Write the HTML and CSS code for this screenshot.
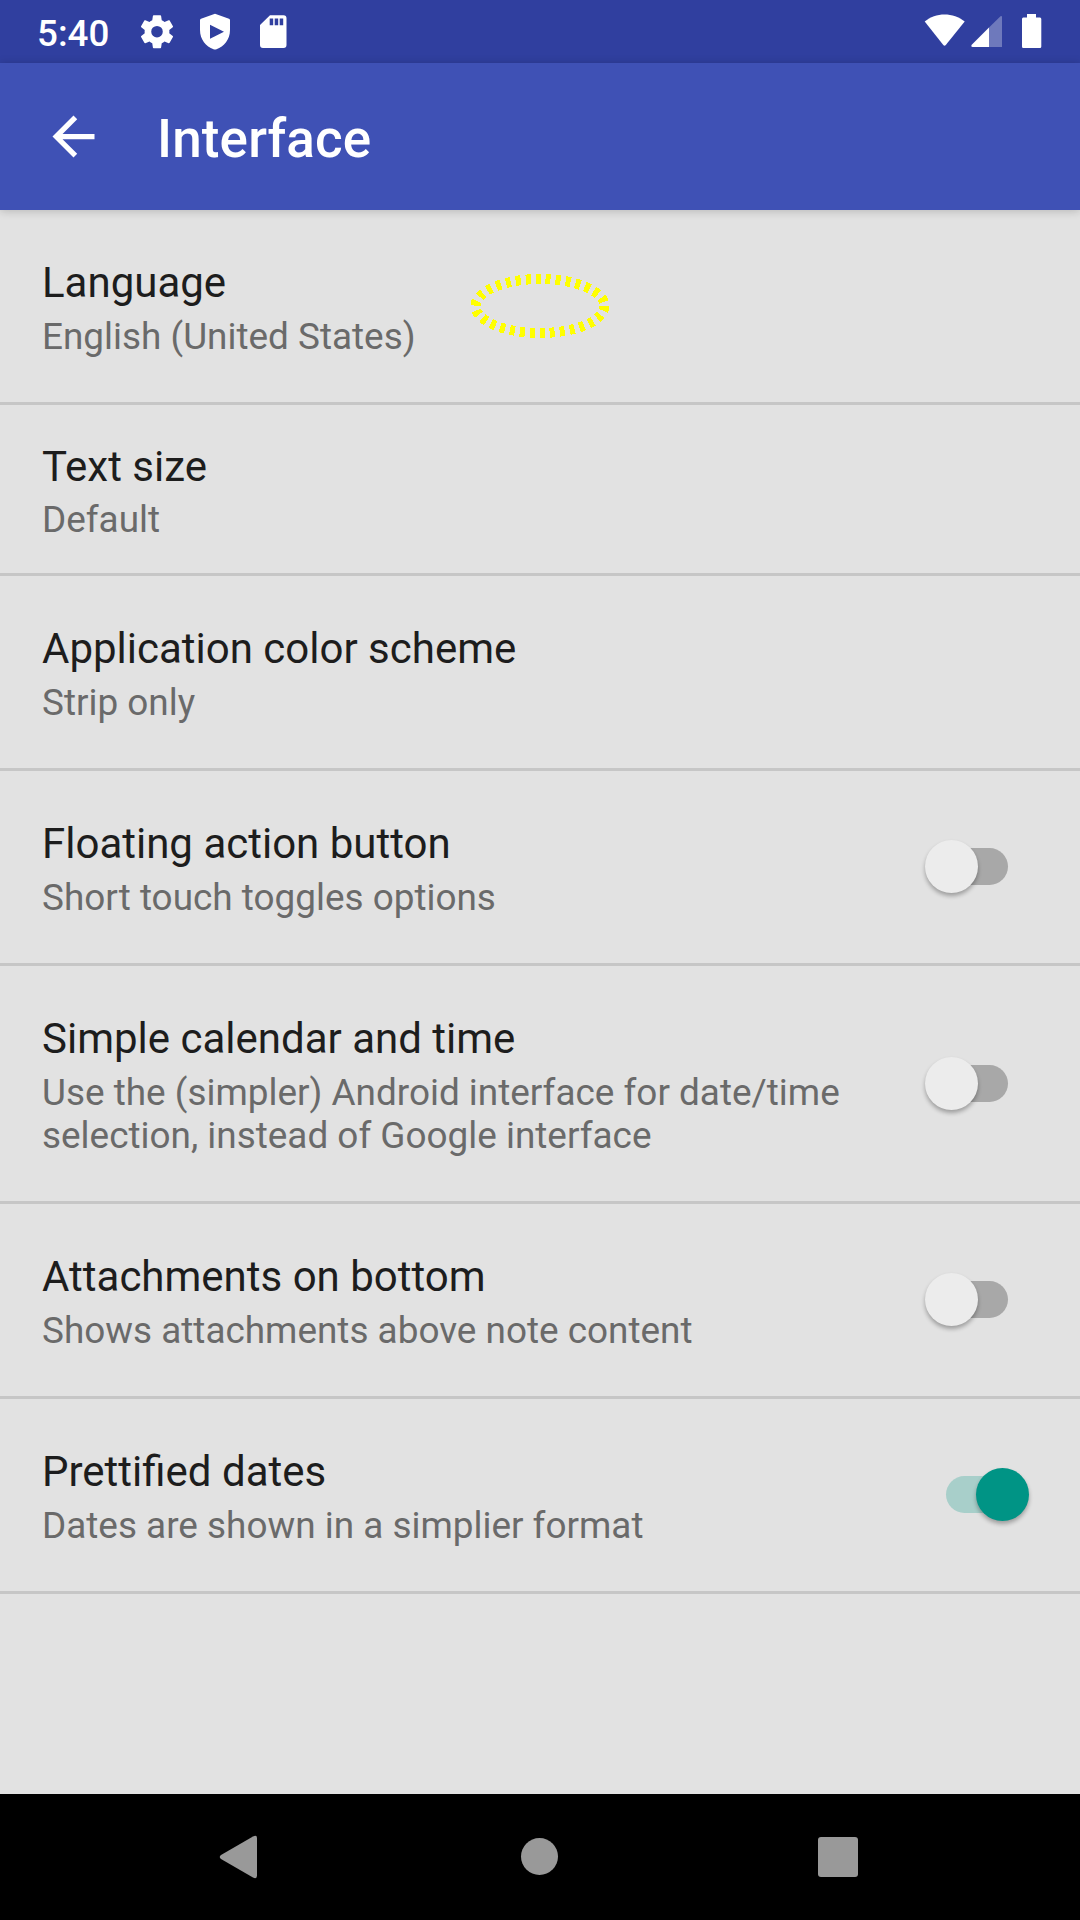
FILE: index.html
```html
<!DOCTYPE html>
<html lang="en">
<head>
<meta charset="utf-8">
<title>Interface</title>
<link rel="stylesheet" href="styles.css">
</head>
<body>
<div class="screen">
  <header class="status">
    <span class="clock">5:40</span>
    <svg class="status-left" width="150" height="63" viewBox="138 0 150 63" fill="#fff">
      <g transform="translate(137.200 11.900) scale(1.650)"><path d="M19.43 12.98c.04-.32.07-.64.07-.98s-.03-.66-.07-.98l2.11-1.65c.19-.15.24-.42.12-.64l-2-3.46c-.12-.22-.39-.3-.61-.22l-2.49 1c-.52-.4-1.080-.73-1.690-.98l-.38-2.650C14.460 2.180 14.250 2 14 2h-4c-.25 0-.46.18-.49.42l-.38 2.650c-.61.25-1.170.59-1.690.98l-2.490-1c-.23-.09-.49 0-.61.22l-2 3.460c-.13.22-.07.49.12.64l2.110 1.650c-.04.32-.07.65-.07.98s.03.66.07.98l-2.110 1.650c-.19.15-.24.42-.12.64l2 3.460c.12.22.39.3.61.22l2.490-1c.52.4 1.080.73 1.690.98l.38 2.650c.03.24.24.42.49.42h4c.25 0 .46-.18.49-.42l.38-2.650c.61-.25 1.170-.59 1.690-.98l2.490 1c.23.09.49 0 .61-.22l2-3.460c.12-.22.07-.49-.12-.64zM12 15.500a3.500 3.500 0 1 1 0-7 3.500 3.500 0 0 1 0 7z"/></g>
      <path fill-rule="evenodd" d="M215 13.700 229 18.700Q230 19 230 20.500V30C230 39.500 224 46.500 216.500 49.300Q215 49.900 213.500 49.300C206 46.500 200 39.500 200 30V20.500Q200 19 201 18.700ZM210 24.800V38.700L224 31.700Z"/>
      <path fill-rule="evenodd" d="M270 15.300H283.500Q286.500 15.300 286.500 18.300V45Q286.500 48 283.500 48H263Q260 48 260 45V25ZM269.700 18.500V25.200H273.200V18.500ZM274.700 18.500V25.200H278.200V18.500ZM279.700 18.500V25.200H283.200V18.500Z"/>
    </svg>
    <svg class="status-right" width="120" height="63" viewBox="922 0 120 63" fill="#fff">
      <path d="M924.700 21.500C935.500 12 953.500 12 964.700 21.500L945.800 45Q944.500 46.300 943.300 45Z"/>
      <path d="M1002 47V17Q1002 15.500 1000.500 16.200L989 27.500V47Z" opacity=".3"/>
      <path d="M989 27.500V47H972.500Q970.700 47 971.500 45Z"/>
      <path d="M1027 14H1036V17.500H1040Q1041.300 17.500 1041.300 19V46.500Q1041.300 48 1040 48H1023.300Q1022 48 1022 46.500V19Q1022 17.500 1023.300 17.500H1027Z"/>
    </svg>
  </header>
  <div class="toolbar">
    <svg class="back" width="63" height="63" viewBox="0 0 24 24" fill="#fff"><path d="M20 11H7.830l5.590-5.590L12 4l-8 8 8 8 1.410-1.410L7.830 13H20v-2z"/></svg>
    <h1 class="heading">Interface</h1>
  </div>
  <main class="list">
    <section class="row"><div class="text"><div class="title">Language</div><div class="summary">English (United States)</div></div>
      <svg class="ring" width="144" height="70" viewBox="468 271 144 70" shape-rendering="crispEdges"><ellipse cx="540" cy="306" rx="64.500" ry="27"/></svg>
    </section>
    <section class="row compact"><div class="text"><div class="title">Text size</div><div class="summary">Default</div></div></section>
    <section class="row"><div class="text"><div class="title">Application color scheme</div><div class="summary">Strip only</div></div></section>
    <section class="row"><div class="text"><div class="title">Floating action button</div><div class="summary">Short touch toggles options</div></div><span class="switch"></span></section>
    <section class="row"><div class="text"><div class="title">Simple calendar and time</div><div class="summary">Use the (simpler) Android interface for date/time<br>selection, instead of Google interface</div></div><span class="switch"></span></section>
    <section class="row"><div class="text"><div class="title">Attachments on bottom</div><div class="summary">Shows attachments above note content</div></div><span class="switch"></span></section>
    <section class="row"><div class="text"><div class="title">Prettified dates</div><div class="summary">Dates are shown in a simplier format</div></div><span class="switch on"></span></section>
  </main>
  <nav class="nav">
    <svg width="1080" height="126" viewBox="0 1794 1080 126" fill="#999">
      <path d="M221 1855 253 1836.500Q257 1834.500 257 1838V1875.500Q257 1879.500 253 1877.500L221 1859Q218.500 1857 221 1855Z"/>
      <circle cx="539.500" cy="1856.500" r="18.500"/>
      <rect x="818" y="1837" width="40" height="40" rx="3"/>
    </svg>
  </nav>
</div>
</body>
</html>
```
FILE: styles.css
```css
* { box-sizing: border-box; }
body { margin: 0; font-family: Roboto, sans-serif; }
.screen { width: 1080px; height: 1920px; display: flex; flex-direction: column; background: #e2e2e2; overflow: hidden; }
.status { height: 63px; flex: none; display: flex; background: #303f9f; color: #fff; padding: 0 38px 0 37px; }
.clock { width: 101px; font-size: 36.75px; line-height: 67px; font-weight: 500; }
.status-left, .status-right { flex: none; }
.status-right { margin-left: auto; }
.toolbar { height: 147px; flex: none; display: flex; align-items: center; padding: 0 42px; background: #3f51b5; color: #fff; box-shadow: 0 1px 9px rgba(0, 0, 0, .2); position: relative; }
.heading { margin: 4px 0 0 52px; font-size: 53px; line-height: 62px; font-weight: 500; letter-spacing: .15px; }
.list { flex: 1; }
.row { position: relative; display: flex; align-items: center; justify-content: space-between; padding: 48px 42px 44px; border-bottom: 3px solid #c6c6c6; }
.compact { padding: 37px 42px 32px; }
.title { font-size: 42px; line-height: 49px; color: #1d1d1d; }
.summary { margin-top: 8px; font-size: 36.9px; line-height: 43px; color: #6a6a6a; }
.compact .summary { margin-top: 7px; }
.ring { position: absolute; left: 468px; top: 61px; }
.ring ellipse { fill: none; stroke: #ff0; stroke-width: 10; stroke-dasharray: 5 5; }
.switch { position: relative; width: 83px; height: 53px; margin: 0 30px 5px 0; flex: none; }
.switch::before { content: ""; position: absolute; right: 0; top: 8px; width: 62px; height: 37px; border-radius: 19px; background: #a8a8a8; }
.switch::after { content: ""; position: absolute; left: 0; top: 0; width: 53px; height: 53px; border-radius: 50%; background: #ececec; box-shadow: 0 3px 4px rgba(0, 0, 0, .3); }
.switch.on { margin-right: 9px; }
.switch.on::before { right: auto; left: 0; background: #a8cfca; }
.switch.on::after { left: auto; right: 0; background: #009485; }
.nav { height: 126px; flex: none; background: #000; }
.nav svg { display: block; }
```
